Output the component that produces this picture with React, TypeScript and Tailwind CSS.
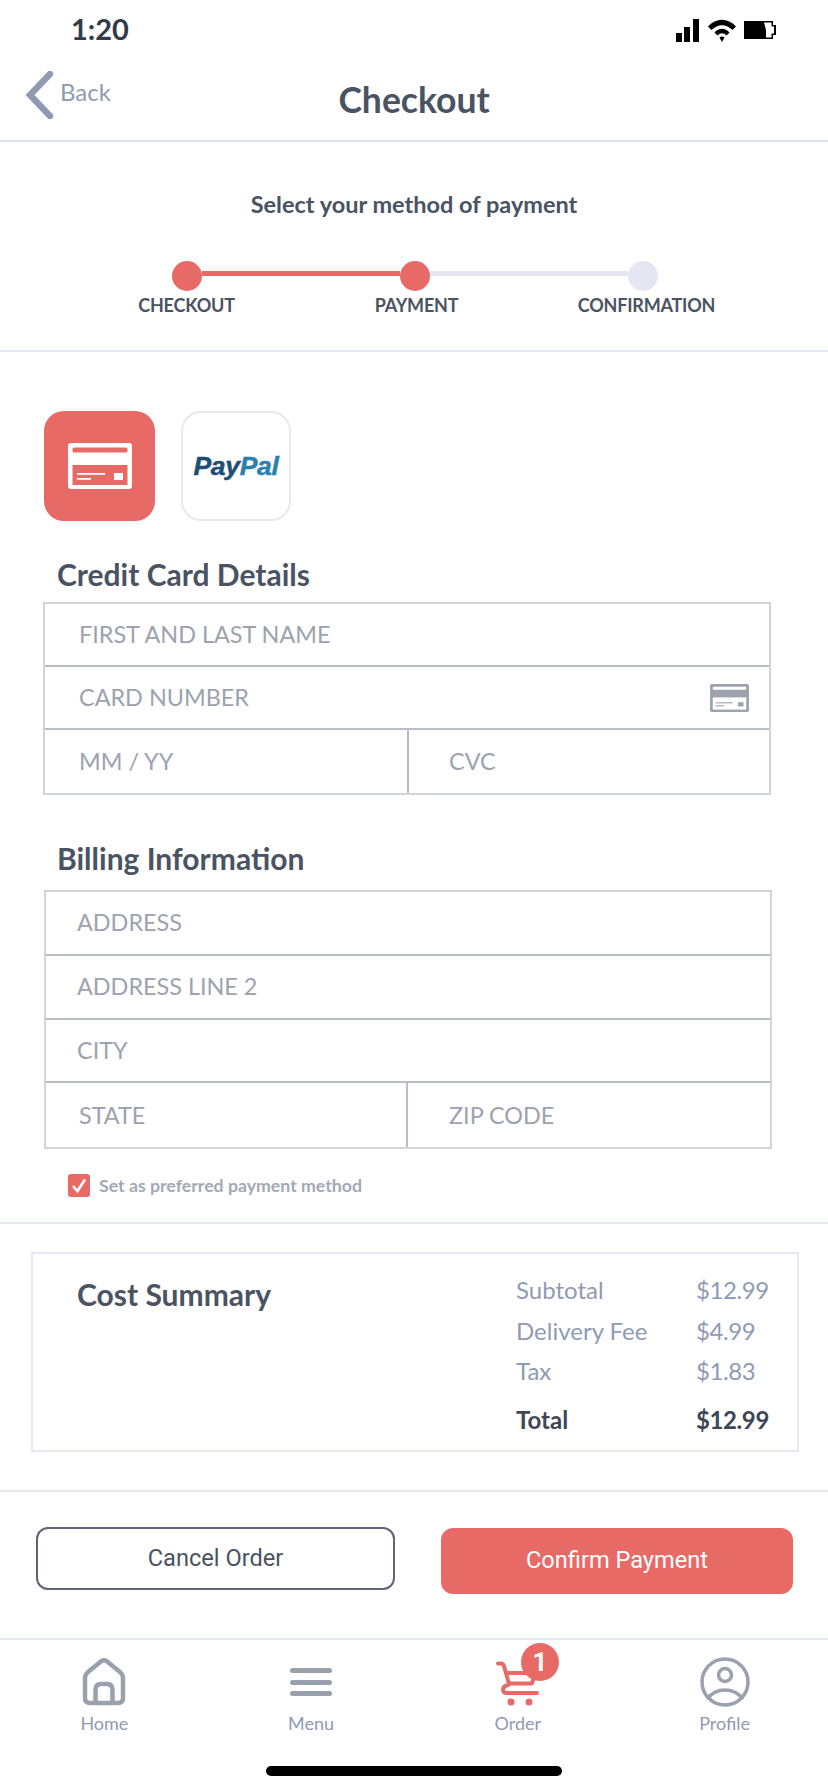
import React from "react";

const CardIcon = ({ className, hole }: { className?: string; hole: string }) => (
  <svg viewBox="0 0 64 46" className={className}>
    <rect x="0" y="0" width="64" height="46" rx="3" fill="currentColor" />
    <rect x="4.5" y="4.5" width="55" height="5" rx="1.5" fill={hole} />
    <rect x="4.5" y="22" width="55" height="20" fill={hole} />
    <rect x="9" y="30" width="28" height="1.8" fill="currentColor" />
    <rect x="9" y="35" width="14" height="1.8" fill="currentColor" />
    <rect x="46" y="30" width="9" height="7" fill="currentColor" />
  </svg>
);

const Field = ({ label, pl = "pl-[34px]", className = "", children }: { label: string; pl?: string; className?: string; children?: React.ReactNode }) => (
  <div className={`h-full flex items-center ${pl} text-[23.4px] text-[#9ca3af] ${className}`}>
    <span>{label}</span>
    {children}
  </div>
);

const Row = ({ label, value, bold }: { label: string; value: string; bold?: boolean }) => (
  <div className={`flex text-[24px] leading-[40.5px] ${bold ? "font-bold text-[#3f4756] mt-[8.5px]" : "text-[#8f9bb3]"}`}>
    <span className="w-[180px] shrink-0">{label}</span>
    <span className="tracking-[-0.4px] whitespace-nowrap">{value}</span>
  </div>
);

const NavItem = ({ label, icon, className = "" }: { label: string; icon: React.ReactNode; className?: string }) => (
  <div className={`w-[207px] flex flex-col items-center ${className}`}>
    <div className="h-[58px] flex items-center justify-center relative">{icon}</div>
    <span className="text-[18px] text-[#8f9bb3] leading-[20px] mt-[1px]">{label}</span>
  </div>
);

export default function App() {
  return (
    <div className="w-[828px] h-[1792px] bg-white overflow-hidden font-['Lato',sans-serif] text-[#4a5362]">
      {/* Status bar */}
      <div className="h-[60px] flex items-center justify-between pl-[71px] pr-[52px]">
        <span className="text-[29px] font-bold text-[#333b49] leading-none -mt-[3px]">1:20</span>
        <svg viewBox="0 0 100 24" className="w-[100px] h-[24px] mt-[2px] text-black" fill="currentColor">
          <rect x="0" y="14" width="6" height="9" />
          <rect x="8" y="8" width="6" height="15" />
          <rect x="17" y="0" width="6" height="23" />
          <path d="M32 7.5 C40 -1.5,52 -1.5,60 7.5 L56.5 11 C50 4.5,42 4.5,35.5 11Z" />
          <path d="M38.5 13.5 C43 8.5,49 8.5,53.5 13.5 L50.5 16.5 C47.5 13.5,44.5 13.5,41.5 16.5Z" />
          <path d="M43.5 18.5 C45 17,47 17,48.5 18.5 L46 23Z" />
          <path d="M68 2 H97 V6 H100 V16 H97 V20 H68 Z" />
          <path fill="#fff" d="M88 3.5 H95.5 V7.5 H98 V14.5 H95.5 V18.5 H90 L90 11 Z" />
        </svg>
      </div>

      {/* Header */}
      <div className="h-[82px] border-b-[2px] border-[#dfe3ee] relative flex items-center justify-center">
        <div className="absolute left-[24px] top-[11px] flex items-start">
          <svg viewBox="0 0 30 48" className="w-[30px] h-[48px]">
            <path d="M26 3 L6 24 L26 45" fill="none" stroke="#8f9bb3" strokeWidth="6.5" strokeLinecap="round" strokeLinejoin="miter" />
          </svg>
          <span className="ml-[6px] text-[24px] leading-[40px] text-[#8f9bb3] mt-[1px]">Back</span>
        </div>
        <h1 className="text-[35.5px] font-bold leading-none -mt-[1px]">Checkout</h1>
      </div>

      {/* Stepper */}
      <div className="h-[210px] border-b-[2px] border-[#e4e7f0] flex flex-col items-center">
        <p className="text-[23.5px] font-bold mt-[46px] leading-[32px]">Select your method of payment</p>
        <div className="mt-[41px] flex items-start w-[486px] ml-[2px]">
          <div className="w-[30px] h-[30px] rounded-full bg-[#e86a67] shrink-0" />
          <div className="flex-1 h-[5px] mt-[10px] bg-[#e86a67]" />
          <div className="w-[30px] h-[30px] rounded-full bg-[#e86a67] shrink-0" />
          <div className="flex-1 h-[5px] mt-[10px] bg-[#e4e7f2]" />
          <div className="w-[30px] h-[30px] rounded-full bg-[#e4e7f2] shrink-0" />
        </div>
        <div className="mt-[2px] w-[690px] ml-[5px] grid grid-cols-3 text-[18px] font-bold text-center leading-[24px] tracking-[-0.2px]">
          <span>CHECKOUT</span>
          <span>PAYMENT</span>
          <span>CONFIRMATION</span>
        </div>
      </div>

      {/* Payment body */}
      <div className="h-[872px] border-b-[2px] border-[#e4e7f0] px-[43px]">
        <div className="flex gap-[26px] pt-[59px] ml-[1px]">
          <div className="w-[111px] h-[110px] rounded-[20px] bg-[#e86a67] flex items-center justify-center text-white">
            <CardIcon className="w-[64px] h-[46px]" hole="#e86a67" />
          </div>
          <div className="w-[110px] h-[110px] rounded-[20px] border-[2px] border-[#e6e9f2] flex items-center justify-center">
            <span className="font-['Liberation_Sans',sans-serif] font-bold italic text-[26.5px] tracking-[-0.3px] leading-none [-webkit-text-stroke:0.5px]">
              <span className="text-[#1f4e75]">Pay</span>
              <span className="text-[#2c80b0]">Pal</span>
            </span>
          </div>
        </div>

        <h2 className="pl-[14px] text-[30px] font-bold leading-[36px] mt-[35px]">Credit Card Details</h2>
        <div className="mt-[10px] w-[728px] h-[193px] border-[2px] border-[#d1d5db] grid grid-rows-3">
          <div className="border-b-[2px] border-[#b9bdc6]"><Field label="FIRST AND LAST NAME" /></div>
          <div className="border-b-[2px] border-[#b9bdc6]">
            <Field label="CARD NUMBER" className="justify-between pr-[20px]">
              <CardIcon className="w-[39px] h-[28px] text-[#9ca3af]" hole="#ffffff" />
            </Field>
          </div>
          <div className="flex">
            <div className="w-[364px] border-r-[2px] border-[#b9bdc6]"><Field label="MM / YY" /></div>
            <Field label="CVC" pl="pl-[40px]" />
          </div>
        </div>

        <h2 className="pl-[14px] text-[30px] font-bold leading-[36px] mt-[45px]">Billing Information</h2>
        <div className="mt-[14px] ml-[1px] w-[728px] h-[259px] border-[2px] border-[#d1d5db] grid grid-rows-4">
          <div className="border-b-[2px] border-[#b9bdc6]"><Field label="ADDRESS" pl="pl-[31px]" /></div>
          <div className="border-b-[2px] border-[#b9bdc6]"><Field label="ADDRESS LINE 2" pl="pl-[31px]" /></div>
          <div className="border-b-[2px] border-[#b9bdc6]"><Field label="CITY" pl="pl-[31px]" /></div>
          <div className="flex">
            <div className="w-[362px] border-r-[2px] border-[#b9bdc6]"><Field label="STATE" pl="pl-[33px]" /></div>
            <Field label="ZIP CODE" pl="pl-[41px]" />
          </div>
        </div>

        <div className="mt-[25px] ml-[25px] flex items-center">
          <div className="w-[22px] h-[23px] rounded-[3px] bg-[#e86a67] flex items-center justify-center">
            <svg viewBox="0 0 22 23" className="w-[22px] h-[23px]">
              <path d="M5 12 L9.5 17 L17 5.5" fill="none" stroke="#fff" strokeWidth="2.6" />
            </svg>
          </div>
          <span className="ml-[9px] text-[17.7px] font-bold text-[#a3a9b5] leading-none">Set as preferred payment method</span>
        </div>
      </div>

      {/* Cost summary */}
      <div className="h-[268px] border-b-[2px] border-[#e4e7f0] px-[31px] pt-[28px]">
        <div className="w-[768px] h-[200px] border-[2px] border-[#e6e9f2] flex justify-between pl-[44px] pr-[29px] pt-[16px]">
          <h2 className="text-[30px] font-bold leading-[36px] mt-[6px]">Cost Summary</h2>
          <div className="w-[252px]">
            <Row label="Subtotal" value="$12.99" />
            <Row label="Delivery Fee" value="$4.99" />
            <Row label="Tax" value="$1.83" />
            <Row label="Total" value="$12.99" bold />
          </div>
        </div>
      </div>

      {/* Actions */}
      <div className="h-[148px] border-b-[2px] border-[#e4e7f0] flex items-start justify-between pl-[36px] pr-[35px] pt-[35px] font-['Roboto',sans-serif] text-[23.6px]">
        <button className="w-[359px] h-[63px] rounded-[12px] border-[2px] border-[#5d6475] text-[#4a5362] flex items-center justify-center">Cancel Order</button>
        <button className="w-[352px] h-[66px] mt-[1px] rounded-[12px] bg-[#e86a67] text-white flex items-center justify-center">Confirm Payment</button>
      </div>

      {/* Bottom nav */}
      <div className="flex pt-[14px] pl-[1px]">
        <NavItem
          label="Home"
          icon={
            <svg viewBox="0 0 44 50" className="w-[44px] h-[50px] -mt-[2px]" fill="none" stroke="#9aa1ae" strokeWidth="4.5" strokeLinejoin="round">
              <path d="M19.5 4 Q22 2.5 24.5 4 L38 15 Q41 18 41 21 V41 Q41 46 36 46 H8 Q3 46 3 41 V21 Q3 18 6 15 Z" />
              <path d="M13.5 46 V33 Q13.5 27 19 27 H25 Q30.5 27 30.5 33 V46" />
            </svg>
          }
        />
        <NavItem
          label="Menu"
          icon={
            <div className="flex flex-col gap-[6.5px] w-[42px] -mt-[2px]">
              <div className="h-[5px] rounded-full bg-[#9aa1ae]" />
              <div className="h-[5px] rounded-full bg-[#9aa1ae]" />
              <div className="h-[5px] rounded-full bg-[#9aa1ae]" />
            </div>
          }
        />
        <NavItem
          label="Order"
          icon={
            <>
              <svg viewBox="0 0 46 46" className="w-[46px] h-[46px]" fill="none" stroke="#e86a67" strokeWidth="4" strokeLinecap="round" strokeLinejoin="round">
                <path d="M3 3.5 H6 Q8 3.5 9 6 L14 24" />
                <path d="M12 13 H40 L37 23.5 H14" />
                <path d="M42 33 H12 Q8 33 8 29.5 Q8 26 13 25" />
                <circle cx="16" cy="42" r="3.5" fill="#e86a67" stroke="none" />
                <circle cx="34" cy="42" r="3.5" fill="#e86a67" stroke="none" />
              </svg>
              <div className="absolute left-[26px] -top-[11px] w-[38px] h-[38px] rounded-full bg-[#e86a67] flex items-center justify-center text-white text-[26px] font-bold font-['Roboto',sans-serif]">1</div>
            </>
          }
        />
        <NavItem
          label="Profile"
          icon={
            <svg viewBox="0 0 50 50" className="w-[50px] h-[50px] -mt-[2px]" fill="none" stroke="#9aa1ae" strokeWidth="3.5">
              <circle cx="25" cy="25" r="23" />
              <circle cx="25" cy="18" r="6.5" />
              <path d="M7 42 Q14 33 25 33 Q36 33 43 42" />
            </svg>
          }
        />
      </div>

      {/* Home indicator */}
      <div className="mx-auto mt-[33px] w-[296px] h-[10px] rounded-full bg-black" />
    </div>
  );
}
